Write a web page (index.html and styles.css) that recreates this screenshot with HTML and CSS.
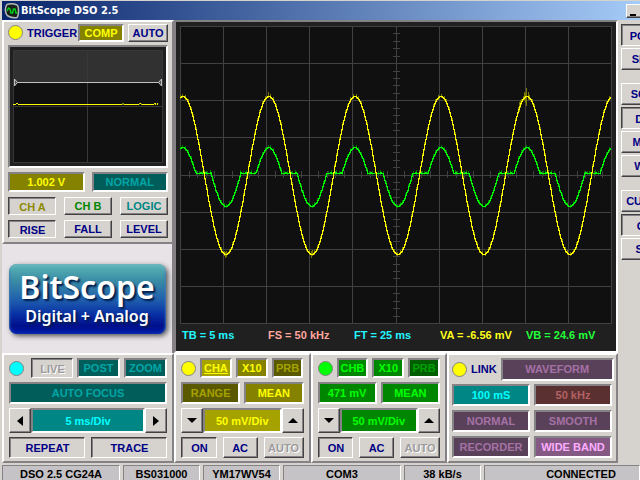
FILE: index.html
```
<!DOCTYPE html>
<html lang="en">
<head>
    <meta charset="UTF-8">
    <meta name="viewport" content="width=device-width, initial-scale=1.0">
    <title>BitScope DSO 2.5</title>
    <link rel="stylesheet" href="styles.css">
</head>
<body>
    <header class="titlebar">
        <svg class="app-icon" width="16" height="16" viewBox="0 0 16 16">
            <path d="M3 1.500Q8 0 13 2Q14.500 3 14.500 8T13 14.500Q9 15.500 4 13Q2 12 1.500 8T3 1.500z" fill="#182018" stroke="#b5bab5" stroke-width="1.500"/>
            <path d="M3 8l1.500-3 1.500 1 1 4 1.500 0 1-4 1.500 0 1 4 1.500 0" fill="none" stroke="#00d018" stroke-width="1.500"/>
        </svg>
        <h1>BitScope DSO 2.5</h1>
        <button class="btn minimize" aria-label="Minimize"><span></span></button>
    </header>

    <main class="workspace">
        <div class="left">
            <section class="panel trigger">
                <div class="row trigger-head">
                    <span class="led yellow"></span>
                    <span class="name">TRIGGER</span>
                    <button class="lit olive comp">COMP</button>
                    <button class="btn auto">AUTO</button>
                </div>
                <div class="mini">
                    <svg width="100%" height="113" viewBox="0 0 152 113" preserveAspectRatio="none" shape-rendering="crispEdges">
                        <rect width="152" height="113" fill="#101010"/>
                        <rect width="152" height="32" fill="#313131"/>
                        <path d="M.5 .5h151v112H.5zM75.5 0v113M0 56.5h152" fill="none" stroke="#393839"/>
                        <path d="M2 32.5h148" stroke="#c6c3c6"/>
                        <path d="M1.5 29v7l3-3.500zM150.500 29v7l-3-3.500z" fill="#555" stroke="#c6c3c6"/>
                        <path d="M0 54.500h3m2 0h106m1 0h16m2 0h13m1 0h1m1 0h1M3 53.500h2m106 0h1m16 0h2m13 0h2m1 0h1" stroke="#ff0"/>
                    </svg>
                </div>
                <div class="pair">
                    <output class="lit olive">1.002 V</output>
                    <button class="lit teal-off">NORMAL</button>
                </div>
                <div class="trio">
                    <button class="btn on olive-text">CH A</button>
                    <button class="btn green-text">CH B</button>
                    <button class="btn teal-text">LOGIC</button>
                    <button class="btn on">RISE</button>
                    <button class="btn">FALL</button>
                    <button class="btn">LEVEL</button>
                </div>
            </section>
            <div class="brand">
                <div class="logo">
                    <strong>BitScope</strong>
                    <span>Digital + Analog</span>
                </div>
            </div>
        </div>

        <section class="scope">
            <svg class="plot" width="100%" height="298" viewBox="0 0 432 298" preserveAspectRatio="none" shape-rendering="crispEdges">
                <rect width="432" height="298" fill="#101010"/>
                <path id="grid" class="grid"/>
                <path id="noise-b" class="noise-b"/>
                <path id="trace-b" class="trace-b"/>
                <path id="noise-a" class="noise-a"/>
                <path id="trace-a" class="trace-a"/>
            </svg>
            <div class="readings">
                <span class="cyan">TB = 5 ms</span>
                <span class="pink">FS = 50 kHz</span>
                <span class="cyan">FT = 25 ms</span>
                <span class="yel">VA = -6.56 mV</span>
                <span class="grn">VB = 24.6 mV</span>
            </div>
        </section>

        <nav class="tools">
            <div class="tool-group">
                <button class="btn on">POWER</button>
                <button class="btn">SETUP</button>
            </div>
            <div class="tool-group">
                <button class="btn">SCOPE</button>
                <button class="btn on">DUAL</button>
                <button class="btn">MIXED</button>
                <button class="btn">WAVE</button>
            </div>
            <div class="tool-group">
                <button class="btn">CURSOR</button>
                <button class="btn on">GRID</button>
                <button class="btn">SAVE</button>
            </div>
        </nav>
    </main>

    <div class="controls">
        <!-- Timebase -->
        <section class="panel control">
            <div class="row r1">
                <span class="led aqua"></span>
                <button class="btn on" disabled>LIVE</button>
                <button class="lit teal-off">POST</button>
                <button class="lit teal-off">ZOOM</button>
            </div>
            <div class="row r2">
                <button class="lit teal-off">AUTO FOCUS</button>
            </div>
            <div class="row spin">
                <button class="btn" aria-label="Slower"><svg width="6" height="10"><path d="M6 0v10L0 5z"/></svg></button>
                <output class="lit teal">5 ms/Div</output>
                <button class="btn" aria-label="Faster"><svg width="6" height="10"><path d="M0 0v10l6-5z"/></svg></button>
            </div>
            <div class="row r4">
                <button class="btn on">REPEAT</button>
                <button class="btn on">TRACE</button>
            </div>
        </section>

        <!-- Channel A -->
        <section class="panel control channel">
            <div class="row r1">
                <span class="led yellow"></span>
                <button class="lit olive-hi"><u>CHA</u></button>
                <button class="lit olive">X10</button>
                <button class="lit olive-off">PRB</button>
            </div>
            <div class="row r2">
                <button class="lit olive-off">RANGE</button>
                <button class="lit olive">MEAN</button>
            </div>
            <div class="row spin">
                <button class="btn" aria-label="Channel A down"><svg width="10" height="5"><path d="M0 0h10L5 5z"/></svg></button>
                <output class="lit olive-hi">50 mV/Div</output>
                <button class="btn" aria-label="Channel A up"><svg width="10" height="5"><path d="M0 5h10L5 0z"/></svg></button>
            </div>
            <div class="row r4">
                <button class="btn on">ON</button>
                <button class="btn">AC</button>
                <button class="btn wide" disabled>AUTO</button>
            </div>
        </section>

        <!-- Channel B -->
        <section class="panel control channel">
            <div class="row r1">
                <span class="led lime"></span>
                <button class="lit green">CHB</button>
                <button class="lit green">X10</button>
                <button class="lit green-off">PRB</button>
            </div>
            <div class="row r2">
                <output class="lit green">471 mV</output>
                <button class="lit green">MEAN</button>
            </div>
            <div class="row spin">
                <button class="btn" aria-label="Channel B down"><svg width="10" height="5"><path d="M0 0h10L5 5z"/></svg></button>
                <output class="lit green">50 mV/Div</output>
                <button class="btn" aria-label="Channel B up"><svg width="10" height="5"><path d="M0 5h10L5 0z"/></svg></button>
            </div>
            <div class="row r4">
                <button class="btn on">ON</button>
                <button class="btn">AC</button>
                <button class="btn wide" disabled>AUTO</button>
            </div>
        </section>

        <!-- Link / waveform -->
        <section class="panel link">
            <div class="row link-head">
                <span class="led yellow"></span>
                <span class="name">LINK</span>
                <button class="lit plum">WAVEFORM</button>
            </div>
            <div class="link-grid">
                <output class="lit teal">100 mS</output>
                <output class="lit maroon">50 kHz</output>
                <button class="lit plum">NORMAL</button>
                <button class="lit plum">SMOOTH</button>
                <button class="lit plum">RECORDER</button>
                <button class="lit plum-hi">WIDE BAND</button>
            </div>
        </section>
    </div>

    <footer class="status">
        <span class="wide">DSO 2.5 CG24A</span>
        <span>BS031000</span>
        <span>YM17WV54</span>
        <span class="wide">COM3</span>
        <span>38 kB/s</span>
        <span class="rest">CONNECTED</span>
    </footer>

    <script src="scope.js"></script>
</body>
</html>
```

FILE: styles.css
```
* {
    box-sizing: border-box;
}

html {
    overflow: hidden;
}

body {
    margin: 0;
    padding-left: 2px;
    min-height: 100vh;
    display: flex;
    flex-direction: column;
    overflow: hidden;
    background-color: #d6d3ce;
    color: #000084;
    font-family: "Liberation Sans", Arial, sans-serif;
    font-size: 11px;
    font-weight: bold;
    line-height: 12px;
}

svg {
    display: block;
}

/* Title bar */
.titlebar {
    display: flex;
    align-items: center;
    height: 19px;
    margin-top: 1px;
    padding-left: 2px;
    background: linear-gradient(to right, #08246b, #a5cbf7);
    color: #fff;
    overflow: hidden;
}

.titlebar h1 {
    flex: 1;
    margin: 0;
    padding-left: 1px;
    font-family: "DejaVu Sans Condensed", "DejaVu Sans", sans-serif;
    font-size: 11px;
    line-height: 16px;
}

.minimize {
    flex: none;
    width: 16px;
    height: 14px;
    margin-right: -2px;
}

.minimize span {
    display: block;
    width: 6px;
    height: 2px;
    margin: 8px 0 0 3px;
    background-color: #000;
}

/* Buttons and lit indicators */
button,
output {
    display: flex;
    align-items: center;
    justify-content: center;
    min-width: 0;
    padding: 0;
    font: inherit;
    white-space: nowrap;
}

.btn {
    background-color: #d6d3ce;
    color: #000084;
    border: 1px solid;
    border-color: #fff #424142 #424142 #fff;
    box-shadow: inset -1px -1px #848284;
}

.btn.on {
    border-color: #424142 #fff #fff #424142;
    box-shadow: inset 1px 1px #848284;
    padding: 1px 0 0 1px;
}

.btn.minimize {
    display: block;
}

.btn:disabled {
    color: #9c9a9c;
    text-shadow: 1px 1px #fff;
}

.btn svg {
    fill: #000;
}

.lit {
    border: 2px solid;
    border-color: #848284 #fff #fff #848284;
}

.olive { background-color: #848200; color: #ff0; }
.olive-hi { background-color: #a5a200; color: #ff0; }
.olive-off { background-color: #5a5900; color: #a5a200; }
.teal { background-color: #008684; color: #00ffff; }
.teal-off { background-color: #005d5a; color: #00a6a5; }
.green { background-color: #008600; color: #00ff00; }
.green-off { background-color: #005d00; color: #00a200; }
.plum { background-color: #5a415a; color: #a571a5; }
.plum-hi { background-color: #845984; color: #ffaeff; }
.maroon { background-color: #5a3031; color: #b56163; }

.btn.olive-text { color: #8c8a00; }
.btn.green-text { color: #008600; }
.btn.teal-text { color: #008684; }

.led {
    flex: none;
    width: 15px;
    height: 15px;
    border: 1px solid #848284;
    border-radius: 50%;
}

.led.yellow { background-color: #ff0; }
.led.aqua { background-color: #0ff; }
.led.lime { background-color: #0f0; }

/* Panels */
.panel {
    border: 2px solid;
    border-color: #fff #848284 #848284 #fff;
}

.row {
    display: flex;
    align-items: center;
    gap: 4px;
}

.workspace {
    display: grid;
    grid-template-columns: 172px minmax(0, 1fr) 22px;
}

.left {
    display: flex;
    flex-direction: column;
}

.trigger {
    display: flex;
    flex-direction: column;
    gap: 4px;
    padding: 2px 4px 4px;
}

.trigger-head {
    height: 17px;
}

.trigger-head .name {
    flex: 1;
    min-width: 0;
    padding-top: 1px;
}

.trigger-head .lit,
.trigger-head .btn {
    flex: none;
    height: 18px;
}

.trigger-head .comp {
    width: 46px;
}

.trigger-head .auto {
    width: 40px;
}

.mini {
    padding: 3px;
    border: 2px solid;
    border-color: #848284 #fff #fff #848284;
    background-color: #212021;
}

.pair {
    display: grid;
    grid-template-columns: 1fr 1fr;
    gap: 7px;
    height: 20px;
}

.trio {
    display: grid;
    grid-template-columns: repeat(3, 1fr);
    grid-auto-rows: 18px;
    gap: 5px 8px;
    padding-top: 1px;
}

.brand {
    flex: 1;
    display: flex;
    align-items: center;
    justify-content: center;
    border-right: 2px solid #848284;
    background-color: #e7e3e7;
}

.logo {
    display: flex;
    flex-direction: column;
    align-items: center;
    justify-content: center;
    width: 157px;
    height: 70px;
    border-radius: 8px;
    background: linear-gradient(#5ab6b5, #398aa5 25%, #2161ad 50%, #0830a5 72%, #00108c 88%, #0018a5);
    box-shadow: inset 0 2px 3px #6bb6bd, inset 0 -2px 3px #0828ad, 2px 2px 5px #555;
    color: #fff;
    font-family: "Noto Sans", sans-serif;
    text-shadow: 2px 2px 2px #001c4a;
}

.logo strong {
    font-size: 32px;
    font-weight: 600;
    line-height: 34px;
}

.logo span {
    font-size: 16px;
    font-weight: 600;
    line-height: 24px;
}

/* Main display */
.scope {
    padding: 4px;
    border: 2px solid;
    border-color: #848284 #fff #fff #848284;
    background-color: #212021;
}

.plot path {
    fill: none;
    stroke-width: 1px;
}

.grid { stroke: #424142; }
.trace-a { stroke: #ffff00; }
.trace-b { stroke: #00ff00; }
.noise-a { stroke: #7b7900; }
.noise-b { stroke: #007500; }

.readings {
    display: grid;
    grid-template-columns: repeat(5, 1fr);
    padding: 5px 0 6px 2px;
    white-space: nowrap;
}

.cyan { color: #21f7ff; }
.pink { color: #ffa69c; }
.yel { color: #ffff18; }
.grn { color: #21ff39; }

/* Tool buttons run past the window edge */
.tools {
    display: flex;
    flex-direction: column;
    gap: 13px;
    padding: 4px 0 0 3px;
    overflow: hidden;
}

.tool-group {
    display: flex;
    flex-direction: column;
    gap: 2px;
}

.tool-group .btn {
    width: 58px;
    height: 22px;
}

/* Control strip */
.controls {
    display: grid;
    grid-template-columns: 172px minmax(0, 1fr) minmax(0, 1fr) 171px;
    padding-right: 22px;
}

.control {
    display: flex;
    flex-direction: column;
    gap: 4px;
    padding: 3px 5px;
}

.control .row > button,
.control .row > output {
    flex: 1;
    height: 100%;
}

.control .r1 { height: 20px; }
.control .r2 { height: 22px; }
.control .r4 { height: 21px; gap: 6px; }

.control .r1 .led {
    margin-right: 3px;
}

.channel .r1 .led {
    margin-right: 0;
}

.control .spin {
    height: 25px;
    gap: 0;
}

.control .spin > button {
    flex: none;
    width: 22px;
}

.channel .r4 > .wide {
    flex: none;
    width: 40px;
}

.link {
    display: flex;
    flex-direction: column;
    gap: 3px;
    padding: 2px 4px 3px 3px;
}

.link-head {
    height: 24px;
}

.link-head .lit {
    flex: none;
    width: 113px;
    height: 23px;
    margin-left: auto;
}

.link-grid {
    display: grid;
    grid-template-columns: 1fr 1fr;
    grid-auto-rows: 22px;
    gap: 4px;
}

/* Status bar */
.status {
    display: flex;
    gap: 3px;
    padding-top: 2px;
    color: #000;
}

.status span {
    width: 77px;
    height: 18px;
    padding-top: 2px;
    border: 1px solid;
    border-color: #848284 #fff #fff #848284;
    background-color: #c6c3c6;
    text-align: center;
    white-space: nowrap;
}

.status .wide {
    width: 118px;
}

.status .rest {
    flex: 1;
    padding-left: 38px;
}
```

FILE: scope.js
```
var W = 431, H = 297;

// Graticule: 10 x 8 divisions with five ticks per division on both axes
function drawGrid() {
    var d = "";
    for (var i = 0; i <= 10; i++) {
        d += "M" + (Math.round(i * W / 10) + 0.5) + " 0v" + (H + 1);
    }
    for (var j = 0; j <= 8; j++) {
        d += "M0 " + (Math.round(j * H / 8) + 0.5) + "h" + (W + 1);
    }
    for (var k = 1; k < 50; k++) {
        d += "M" + (Math.round(k * W / 50) + 0.5) + " 145v7";
    }
    for (var m = 1; m < 40; m++) {
        d += "M213 " + (Math.round(m * H / 40) + 0.5) + "h7";
    }
    document.getElementById("grid").setAttribute("d", d);
}

function channelA(x) {
    return 149 - 79 * Math.cos(2 * Math.PI * (x - 2) / 86);
}

// Channel B sits at zero between its lobes
function channelB(x) {
    var p = Math.abs(((x - 2 + 43 + 86) % 86) - 43);
    if (p < 13) {
        return 147 - 26 * Math.cos(p / 13 * Math.PI / 2);
    }
    if (p > 28) {
        return 147 + 33 * Math.cos((43 - p) / 15 * Math.PI / 2);
    }
    return 147 - (x % 5 == 0 ? 1 : 0);
}

function drawTrace(id, noiseId, fn) {
    var d = "", n = "", last = Math.round(fn(0));
    for (var x = 0; x < W; x++) {
        var y = Math.round(fn(x));
        var top = Math.min(y, last), len = Math.abs(y - last) + 1;
        d += "M" + (x + 0.5) + " " + top + "v" + len;
        if ((x * 7) % 11 < 4) {
            n += "M" + (x + 0.5) + " " + (top - 2) + "v" + (len + 3);
        }
        last = y;
    }
    if (noiseId == "noise-a") {
        n += "M346.5 62v18M344.500 66v8M345.500 67v10M348.500 66v8M88.500 66v6";
        n += "M339.500 76v10M340.500 74v8M45.500 226v6M46.500 225v6M131.500 225v7M132.500 224v6";
    }
    document.getElementById(id).setAttribute("d", d);
    document.getElementById(noiseId).setAttribute("d", n);
}

drawGrid();
drawTrace("trace-b", "noise-b", channelB);
drawTrace("trace-a", "noise-a", channelA);
```
